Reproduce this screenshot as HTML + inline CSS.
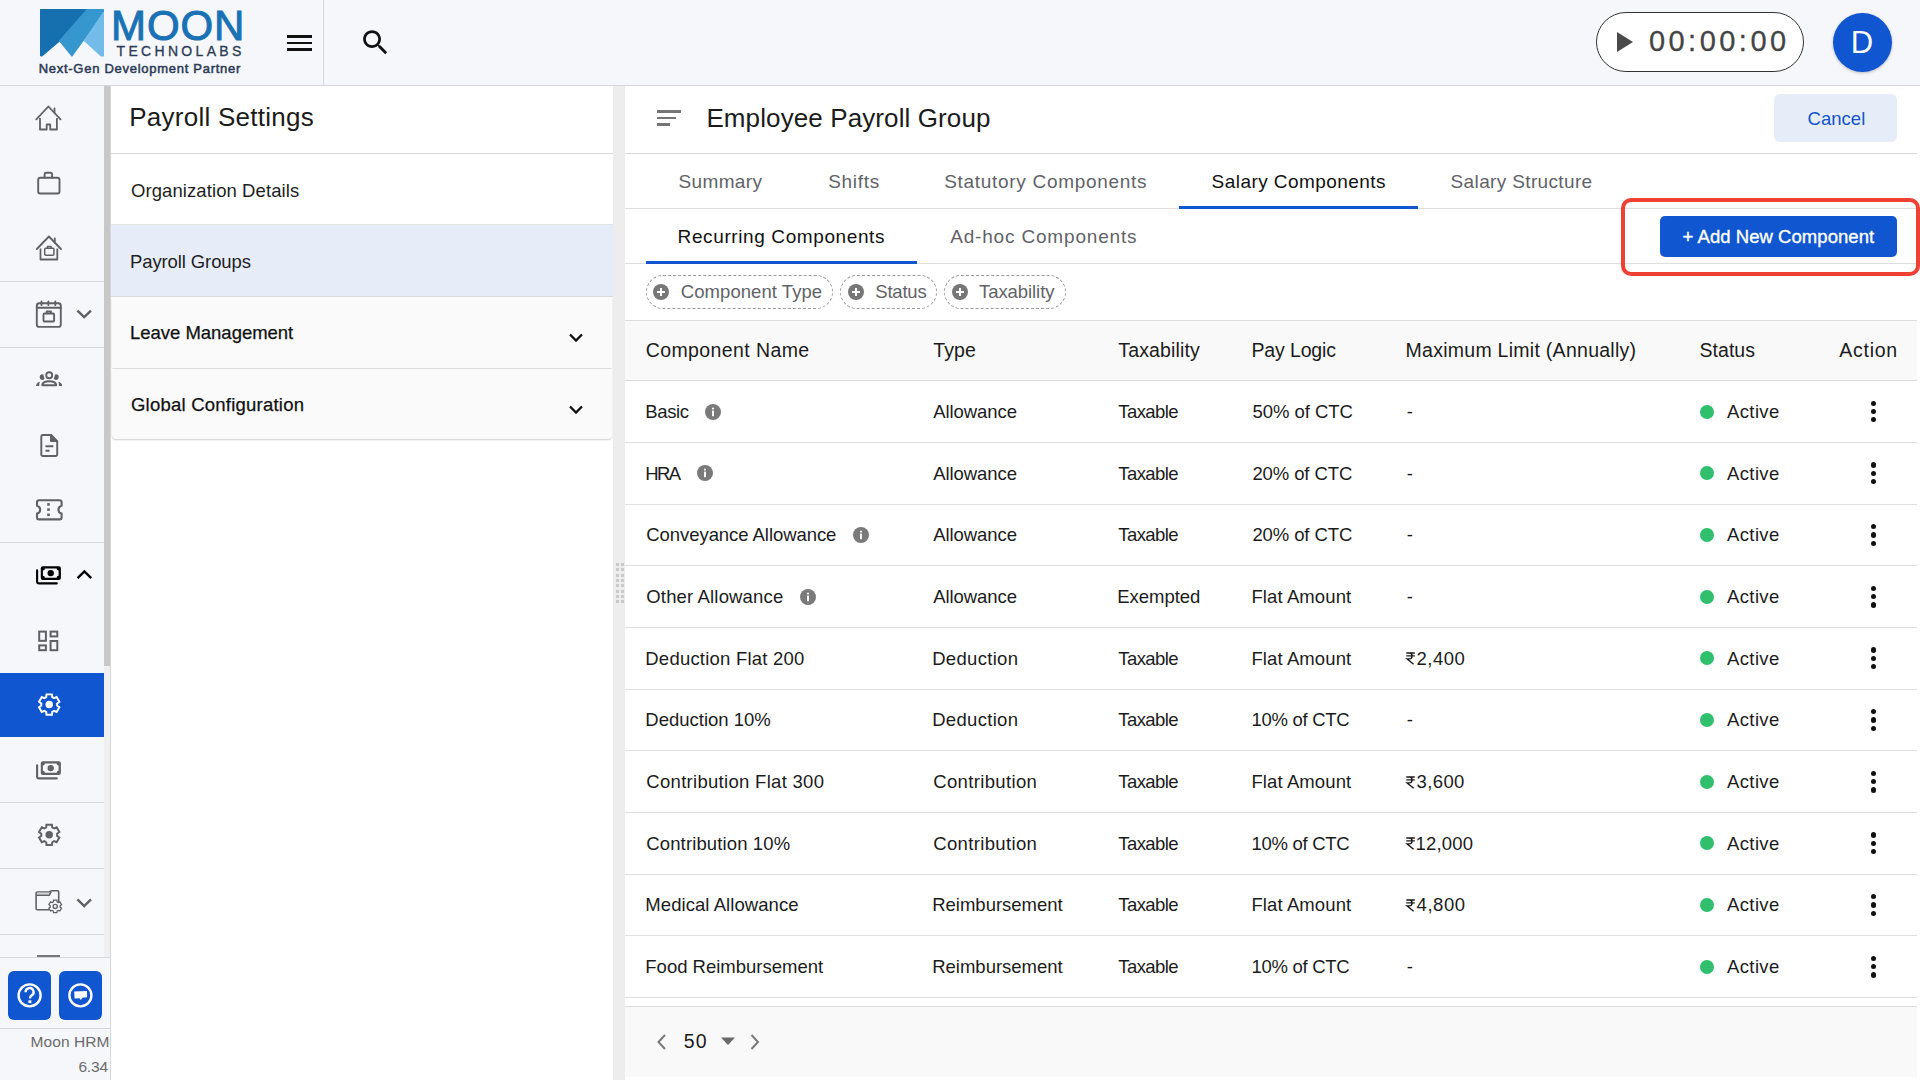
<!DOCTYPE html>
<html><head><meta charset="utf-8"><title>Payroll Settings</title>
<style>
html,body{margin:0;padding:0;width:1920px;height:1080px;overflow:hidden;background:#fff;position:relative;font-family:"Liberation Sans",sans-serif}
.t{position:absolute;line-height:1;white-space:nowrap;font-family:"Liberation Sans",sans-serif}
.r{position:absolute;box-sizing:content-box}
svg.r{overflow:visible}
</style></head><body>
<div class="r" style="left:0px;top:0px;width:1920px;height:85px;background:#f6f7fb;"></div>
<div class="r" style="left:0px;top:85px;width:1920px;height:1px;background:#d6d7dc;"></div>
<div class="r" style="left:323px;top:0px;width:1px;height:85px;background:#d6d7dc;"></div>
<svg class="r" style="left:36px;top:5px;" width="72" height="56" viewBox="0 0 72 56">
<g stroke-linejoin="round" stroke-width="1.2">
<path d="M4.6 4.6 L51 4.6 L23.6 35.8 L5.8 51 L4.6 50.6 Z" fill="#1670b0" stroke="#1670b0"/>
<path d="M51 4.6 L67.4 4.6 L67.4 7.6 L36 51 L23.6 35.8 Z" fill="#3696ce" stroke="#3696ce"/>
<path d="M67.4 7.6 L67.4 51 L65.3 51 L48.5 35.8 Z" fill="#73bce8" stroke="#73bce8"/>
</g></svg>
<div class="t" style="left:111.00px;top:4.5px;font-size:42px;color:#1a72b5;letter-spacing:0.892px;-webkit-text-stroke:1.0px #1a72b5;">MOON</div>
<div class="t" style="left:116.50px;top:43.6px;font-size:14px;color:#2b3a55;letter-spacing:3.325px;-webkit-text-stroke:0.3px #2b3a55;">TECHNOLABS</div>
<div class="t" style="left:38.70px;top:62px;font-size:13px;color:#2b3a55;letter-spacing:0.724px;-webkit-text-stroke:0.5px #2b3a55;">Next-Gen Development Partner</div>
<div class="r" style="left:287px;top:35px;width:25px;height:2.9px;background:#111;"></div>
<div class="r" style="left:287px;top:41.7px;width:25px;height:2.3px;background:#111;"></div>
<div class="r" style="left:287px;top:48.2px;width:25px;height:2.7px;background:#111;"></div>
<svg class="r" style="left:359px;top:26px;" width="33" height="33" viewBox="0 0 24 24"><path fill="#111" d="M15.5 14h-.79l-.28-.27C15.41 12.59 16 11.11 16 9.5 16 5.91 13.09 3 9.5 3S3 5.91 3 9.5 5.91 16 9.5 16c1.61 0 3.09-.59 4.23-1.57l.27.28v.79l5 4.99L20.49 19l-4.99-5zm-6 0C7.01 14 5 11.99 5 9.5S7.01 5 9.5 5 14 7.01 14 9.5 11.99 14 9.5 14z"/></svg>
<div class="r" style="left:1596.3px;top:12px;width:206.2px;height:58.4px;border:1.5px solid #333;border-radius:31px;background:#fff"></div>
<svg class="r" style="left:1617px;top:32px;" width="16" height="20" viewBox="0 0 16 20"><path d="M0 0 L16 10 L0 20 Z" fill="#4a4a4a"/></svg>
<div class="t" style="left:1648.90px;top:27.4px;font-size:29px;color:#444;letter-spacing:3.478px;-webkit-text-stroke:0.3px #444;">00:00:00</div>
<div class="r" style="left:1833px;top:13px;width:59px;height:59px;border-radius:50%;background:#0f56d0;box-shadow:0 1px 3px rgba(0,0,0,.25)"></div>
<div class="t" style="left:1850.70px;top:26.5px;font-size:31px;color:#fff;">D</div>
<div class="r" style="left:0px;top:86px;width:104px;height:871px;background:#f6f7fb;"></div>
<div class="r" style="left:104px;top:86px;width:6px;height:871px;background:#f0f0f0;"></div>
<div class="r" style="left:104px;top:86px;width:6px;height:580px;background:#c8c8c8;"></div>
<div class="r" style="left:110px;top:86px;width:1px;height:994px;background:#d6d7dc;"></div>
<div class="r" style="left:0px;top:281px;width:104px;height:1px;background:#d6d7dc;"></div>
<div class="r" style="left:0px;top:347px;width:104px;height:1px;background:#d6d7dc;"></div>
<div class="r" style="left:0px;top:542px;width:104px;height:1px;background:#d6d7dc;"></div>
<div class="r" style="left:0px;top:802px;width:104px;height:1px;background:#d6d7dc;"></div>
<div class="r" style="left:0px;top:868px;width:104px;height:1px;background:#d6d7dc;"></div>
<div class="r" style="left:0px;top:934px;width:104px;height:1px;background:#d6d7dc;"></div>
<div class="r" style="left:0px;top:673px;width:104px;height:64px;background:#0f56d0;"></div>
<svg class="r" style="left:28px;top:98px;" width="44" height="40" viewBox="0 0 44 40"><g fill="none" stroke="#5f6165" stroke-width="1.8" stroke-linecap="round" stroke-linejoin="round">
<path d="M8.3 21.3 L20.4 8.5 L32.6 21.3"/><path d="M26.5 10.4 L26.5 14.8"/>
<path d="M12 20 V31.5 H18.7 V26.5 H22.2 V31.5 H28.9 V20" stroke-linecap="butt"/></g></svg>
<svg class="r" style="left:28px;top:163px;" width="44" height="40" viewBox="0 0 44 40"><g fill="none" stroke="#5f6165" stroke-width="1.9" stroke-linecap="round" stroke-linejoin="round">
<rect x="10.2" y="14.7" width="21.3" height="15.8" rx="2"/><path d="M16.6 14.7 V11.3 a1.5 1.5 0 0 1 1.5 -1.5 H22.6 a1.5 1.5 0 0 1 1.5 1.5 V14.7"/></g></svg>
<svg class="r" style="left:28px;top:228px;" width="44" height="40" viewBox="0 0 44 40"><g fill="none" stroke="#5f6165" stroke-width="1.8" stroke-linecap="round" stroke-linejoin="round">
<path d="M8.8 21 L20.9 8.5 L33 21"/><path d="M26.8 10.4 L26.8 14.5"/>
<path d="M12.5 20.5 V31.5 H29.3 V20.5" stroke-linecap="butt"/></g>
<g fill="none" stroke="#5f6165" stroke-width="1.5" stroke-linecap="round" stroke-linejoin="round"><rect x="16.7" y="20.3" width="9.2" height="7" rx="1"/><path d="M19.5 20.3 V18.6 H23.1 V20.3"/></g></svg>
<svg class="r" style="left:28px;top:294px;" width="72" height="42" viewBox="0 0 72 42"><g fill="none" stroke="#5f6165" stroke-width="1.9" stroke-linecap="round" stroke-linejoin="round">
<rect x="8.8" y="9.2" width="24" height="23.7" rx="2.5"/><path d="M8.8 13.8 H32.8"/>
<path d="M13.5 7.5 V11 M20.4 7.5 V11 M27.3 7.5 V11"/>
<rect x="15.5" y="19.5" width="10.6" height="8" rx="1"/><path d="M18.7 19.2 V17.5 H23 V19.2"/>
</g><path d="M49.4 16.6 L56.2 23.2 L63 16.6" fill="none" stroke="#5f6165" stroke-width="2.4"/></svg>
<svg class="r" style="left:28px;top:360px;" width="44" height="40" viewBox="0 0 44 40"><g fill="#5f6165">
<ellipse cx="14.3" cy="17.1" rx="2.6" ry="2.8"/><ellipse cx="28.1" cy="17.1" rx="2.6" ry="2.8"/>
<circle cx="21.2" cy="15.2" r="5.6" fill="#f6f7fb"/>
<circle cx="21.2" cy="15.2" r="3.0" fill="none" stroke="#5f6165" stroke-width="1.9"/>
<path d="M14.3 25.2 Q14.6 21.2 21.2 21.2 Q27.9 21.2 28.2 25.2 Z" fill="none" stroke="#5f6165" stroke-width="2.1" stroke-linejoin="round"/>
<path d="M8 26 Q8.3 22.6 11.9 21.8 Q11 23.6 11.3 26 Z"/>
<path d="M34.2 26 Q33.9 22.6 30.3 21.8 Q31.2 23.6 30.9 26 Z"/>
</g></svg>
<svg class="r" style="left:28px;top:425px;" width="44" height="40" viewBox="0 0 44 40"><g fill="none" stroke="#5f6165" stroke-width="1.9" stroke-linecap="round" stroke-linejoin="round">
<path d="M15.3 10 H23.2 L29.2 16.2 V29.5 a1.5 1.5 0 0 1 -1.5 1.5 H14.8 a1.5 1.5 0 0 1 -1.5 -1.5 V11.5 a1.5 1.5 0 0 1 1.5 -1.5z"/>
<path d="M23 10.5 V16 H28.8" /><path d="M17.5 21.2 H25.4 M17.5 25.8 H21.5" stroke-linecap="butt"/></g>
<path d="M23 10 L29.2 16.2 H23 Z" fill="#5f6165"/></svg>
<svg class="r" style="left:28px;top:490px;" width="44" height="40" viewBox="0 0 44 40"><g fill="none" stroke="#5f6165" stroke-width="2.1" stroke-linecap="round" stroke-linejoin="round">
<path d="M9 12.2 a2 2 0 0 1 2 -2 H31.6 a2 2 0 0 1 2 2 V15.8 a4 4 0 0 0 0 7.8 V27.4 a2 2 0 0 1 -2 2 H11 a2 2 0 0 1 -2 -2 V23.6 a4 4 0 0 0 0 -7.8 Z"/></g>
<g fill="#5f6165"><rect x="19.2" y="13.1" width="2.6" height="2.6"/><rect x="19.2" y="18.3" width="2.6" height="2.6"/><rect x="19.2" y="23.5" width="2.6" height="2.6"/></g></svg>
<svg class="r" style="left:28px;top:555px;" width="72" height="42" viewBox="0 0 72 42"><rect x="12.8" y="11.3" width="20.1" height="13.6" rx="2" fill="#000"/>
<path d="M16.9 13.5 H28.6 A2.0 2.0 0 0 0 30.6 15.5 V20.7 A2.0 2.0 0 0 0 28.6 22.7 H16.9 A2.0 2.0 0 0 0 14.9 20.7 V15.5 A2.0 2.0 0 0 0 16.9 13.5 Z" fill="#f6f7fb"/>
<circle cx="22.7" cy="18.1" r="3.2" fill="#000"/>
<path d="M9.1 15.2 V26.4 a2 2 0 0 0 2 2 H28.8" fill="none" stroke="#000" stroke-width="2.1" stroke-linecap="round" stroke-linejoin="round"/><path d="M48.6 23.5 L63.2 16 " fill="none"/><path d="M49.6 23.2 L56.4 16.4 L63.2 23.2" fill="none" stroke="#000" stroke-width="2.4"/></svg>
<svg class="r" style="left:28px;top:620px;" width="44" height="40" viewBox="0 0 44 40"><g fill="none" stroke="#5f6165" stroke-width="2">
<rect x="11.2" y="11.6" width="6.7" height="9.2"/><rect x="22.6" y="11.6" width="6.7" height="4.8"/>
<rect x="11.2" y="25.4" width="6.7" height="4.8"/><rect x="22.6" y="21" width="6.7" height="9.2"/></g></svg>
<svg class="r" style="left:28px;top:685px;" width="44" height="40" viewBox="0 0 44 40"><path d="M23.92 9.35 L18.48 9.35 L18.20 12.08 L16.28 13.20 L13.77 12.07 L11.05 16.78 L13.28 18.39 L13.28 20.61 L11.05 22.22 L13.77 26.93 L16.28 25.80 L18.20 26.92 L18.48 29.65 L23.92 29.65 L24.20 26.92 L26.12 25.80 L28.63 26.93 L31.35 22.22 L29.12 20.61 L29.12 18.39 L31.35 16.78 L28.63 12.07 L26.12 13.20 L24.20 12.08Z" fill="none" stroke="#fff" stroke-width="1.95" stroke-linejoin="miter"/><circle cx="21.2" cy="19.5" r="3.72" fill="#fff"/></svg>
<svg class="r" style="left:28px;top:750px;" width="44" height="40" viewBox="0 0 44 40"><rect x="12.8" y="11.3" width="20.1" height="13.6" rx="2" fill="#5f6165"/>
<path d="M16.9 13.5 H28.6 A2.0 2.0 0 0 0 30.6 15.5 V20.7 A2.0 2.0 0 0 0 28.6 22.7 H16.9 A2.0 2.0 0 0 0 14.9 20.7 V15.5 A2.0 2.0 0 0 0 16.9 13.5 Z" fill="#f6f7fb"/>
<circle cx="22.7" cy="18.1" r="3.2" fill="#5f6165"/>
<path d="M9.1 15.2 V26.4 a2 2 0 0 0 2 2 H28.8" fill="none" stroke="#5f6165" stroke-width="2.1" stroke-linecap="round" stroke-linejoin="round"/></svg>
<svg class="r" style="left:28px;top:815px;" width="44" height="40" viewBox="0 0 44 40"><path d="M23.92 9.65 L18.48 9.65 L18.20 12.38 L16.28 13.50 L13.77 12.37 L11.05 17.08 L13.28 18.69 L13.28 20.91 L11.05 22.52 L13.77 27.23 L16.28 26.10 L18.20 27.22 L18.48 29.95 L23.92 29.95 L24.20 27.22 L26.12 26.10 L28.63 27.23 L31.35 22.52 L29.12 20.91 L29.12 18.69 L31.35 17.08 L28.63 12.37 L26.12 13.50 L24.20 12.38Z" fill="none" stroke="#5f6165" stroke-width="1.95" stroke-linejoin="miter"/><circle cx="21.2" cy="19.8" r="3.72" fill="#5f6165"/></svg>
<svg class="r" style="left:28px;top:880px;" width="72" height="42" viewBox="0 0 72 42"><g fill="none" stroke="#5f6165" stroke-width="1.6" stroke-linejoin="round">
<path d="M21.8 29.7 H9.3 a1.2 1.2 0 0 1 -1.2 -1.2 V13.3 a1.2 1.2 0 0 1 1.2 -1.2 H21.3 L23.5 10.7 H29.5 a1.2 1.2 0 0 1 1.2 1.2 V22"/>
<path d="M8.1 15.3 H21.2 L23.2 11.3"/></g>
<path d="M8.8 13.5 H21 L22.2 11.9 H9.3 Z" fill="#aaa"/>
<path d="M28.90 20.07 L25.50 20.07 L25.33 21.78 L24.13 22.47 L22.57 21.77 L20.87 24.70 L22.26 25.71 L22.26 27.09 L20.87 28.10 L22.57 31.03 L24.13 30.33 L25.33 31.02 L25.50 32.73 L28.90 32.73 L29.07 31.02 L30.27 30.33 L31.83 31.03 L33.53 28.10 L32.14 27.09 L32.14 25.71 L33.53 24.70 L31.83 21.77 L30.27 22.47 L29.07 21.78Z" fill="#f6f7fb" stroke="#5f6165" stroke-width="1.22" stroke-linejoin="miter"/><circle cx="27.2" cy="26.4" r="2.09" fill="none" stroke="#5f6165" stroke-width="1.33"/>
<path d="M49.4 19.4 L56.2 26 L63 19.4" fill="none" stroke="#5f6165" stroke-width="2.4"/></svg>
<div class="r" style="left:37px;top:955px;width:23px;height:2px;background:#777;"></div>
<div class="r" style="left:0px;top:957px;width:110px;height:123px;background:#f6f7fb;"></div>
<div class="r" style="left:0px;top:957px;width:110px;height:1px;background:#d6d7dc;"></div>
<div class="r" style="left:0px;top:1028px;width:110px;height:1px;background:#d6d7dc;"></div>
<div class="r" style="left:8px;top:971px;width:43px;height:49px;border-radius:6px;background:#0f56d0"></div>
<div class="r" style="left:59px;top:971px;width:43px;height:49px;border-radius:6px;background:#0f56d0"></div>
<svg class="r" style="left:8px;top:971px;" width="43" height="49" viewBox="0 0 43 49"><circle cx="21.6" cy="24.4" r="11" fill="none" stroke="#fff" stroke-width="2.4"/><path d="M17.6 21.2 a4 4 0 1 1 5.8 3.4 c-1.3 .8 -1.4 1.6 -1.4 3" fill="none" stroke="#fff" stroke-width="2.3"/><rect x="20.4" y="29.3" width="3" height="2.8" fill="#fff"/></svg>
<svg class="r" style="left:59px;top:971px;" width="43" height="49" viewBox="0 0 43 49"><circle cx="21.4" cy="24.4" r="11" fill="none" stroke="#fff" stroke-width="2.4"/><path d="M15.2 20.6 L28 19.9 L28.1 26.2 L23.2 26.8 L21.9 28.9 L20.4 27.2 L15.6 27.6 Z" fill="#fff"/></svg>
<div class="t" style="left:30.60px;top:1033.5px;font-size:15.5px;color:#6b6b6b;letter-spacing:0.048px;">Moon HRM</div>
<div class="t" style="left:78.40px;top:1059px;font-size:15.5px;color:#6b6b6b;letter-spacing:-0.182px;">6.34</div>
<div class="r" style="left:111px;top:86px;width:502px;height:994px;background:#fff;"></div>
<div class="t" style="left:129.25px;top:104px;font-size:26px;color:#1b1b1b;letter-spacing:0.257px;">Payroll Settings</div>
<div class="r" style="left:111px;top:153px;width:502px;height:1px;background:#d6d7dc;"></div>
<div class="t" style="left:131.00px;top:181.8px;font-size:18.5px;color:#1e1e1e;letter-spacing:0.083px;">Organization Details</div>
<div class="r" style="left:111px;top:224px;width:502px;height:1px;background:#e2e2e2;"></div>
<div class="r" style="left:111px;top:225px;width:502px;height:71px;background:#e6edf8;"></div>
<div class="t" style="left:130.00px;top:253.3px;font-size:18.5px;color:#1e1e1e;letter-spacing:-0.108px;">Payroll Groups</div>
<div class="r" style="left:111px;top:296px;width:502px;height:1px;background:#dcdcdc;"></div>
<div class="r" style="left:112px;top:297px;width:500px;height:71px;background:#fafafa;box-shadow:0 1px 2px rgba(0,0,0,.18)"></div>
<div class="r" style="left:112px;top:369px;width:500px;height:70px;background:#fafafa;border-radius:0 0 4px 4px;box-shadow:0 1px 2px rgba(0,0,0,.2)"></div>
<div class="t" style="left:130.00px;top:323.9px;font-size:18.5px;color:#111;letter-spacing:-0.019px;-webkit-text-stroke:0.25px #111;">Leave Management</div>
<div class="t" style="left:131.00px;top:395.7px;font-size:18.5px;color:#111;letter-spacing:0.228px;-webkit-text-stroke:0.25px #111;">Global Configuration</div>
<svg class="r" style="left:566px;top:332px;" width="20" height="12" viewBox="0 0 20 12"><path d="M4 2.5 L10 8.5 L16 2.5" fill="none" stroke="#111" stroke-width="2.3"/></svg>
<svg class="r" style="left:566px;top:403.5px;" width="20" height="12" viewBox="0 0 20 12"><path d="M4 2.5 L10 8.5 L16 2.5" fill="none" stroke="#111" stroke-width="2.3"/></svg>
<div class="r" style="left:613px;top:86px;width:12px;height:994px;background:#ededed;"></div>
<div class="r" style="left:616px;top:563.0px;width:3px;height:3px;background:#c9c9c9;"></div>
<div class="r" style="left:620.5px;top:563.0px;width:3px;height:3px;background:#c9c9c9;"></div>
<div class="r" style="left:616px;top:568.3px;width:3px;height:3px;background:#c9c9c9;"></div>
<div class="r" style="left:620.5px;top:568.3px;width:3px;height:3px;background:#c9c9c9;"></div>
<div class="r" style="left:616px;top:573.6px;width:3px;height:3px;background:#c9c9c9;"></div>
<div class="r" style="left:620.5px;top:573.6px;width:3px;height:3px;background:#c9c9c9;"></div>
<div class="r" style="left:616px;top:578.9px;width:3px;height:3px;background:#c9c9c9;"></div>
<div class="r" style="left:620.5px;top:578.9px;width:3px;height:3px;background:#c9c9c9;"></div>
<div class="r" style="left:616px;top:584.2px;width:3px;height:3px;background:#c9c9c9;"></div>
<div class="r" style="left:620.5px;top:584.2px;width:3px;height:3px;background:#c9c9c9;"></div>
<div class="r" style="left:616px;top:589.5px;width:3px;height:3px;background:#c9c9c9;"></div>
<div class="r" style="left:620.5px;top:589.5px;width:3px;height:3px;background:#c9c9c9;"></div>
<div class="r" style="left:616px;top:594.8px;width:3px;height:3px;background:#c9c9c9;"></div>
<div class="r" style="left:620.5px;top:594.8px;width:3px;height:3px;background:#c9c9c9;"></div>
<div class="r" style="left:616px;top:600.1px;width:3px;height:3px;background:#c9c9c9;"></div>
<div class="r" style="left:620.5px;top:600.1px;width:3px;height:3px;background:#c9c9c9;"></div>
<div class="r" style="left:625px;top:86px;width:1295px;height:994px;background:#fff;"></div>
<div class="r" style="left:657px;top:110px;width:24px;height:2.6px;background:#757575;"></div>
<div class="r" style="left:657px;top:116.7px;width:19px;height:2.6px;background:#757575;"></div>
<div class="r" style="left:657px;top:123.2px;width:13px;height:2.6px;background:#757575;"></div>
<div class="t" style="left:706.40px;top:104.7px;font-size:26px;color:#1b1b1b;letter-spacing:0.108px;">Employee Payroll Group</div>
<div class="r" style="left:1774px;top:94px;width:123px;height:48px;border-radius:6px;background:#e7edf8"></div>
<div class="t" style="left:1807.50px;top:110px;font-size:18.5px;color:#1155cc;letter-spacing:0.045px;">Cancel</div>
<div class="r" style="left:625px;top:153px;width:1292px;height:1px;background:#d6d7dc;"></div>
<div class="t" style="left:678.60px;top:171.5px;font-size:19px;color:#5f6368;letter-spacing:0.335px;">Summary</div>
<div class="t" style="left:828.20px;top:171.5px;font-size:19px;color:#5f6368;letter-spacing:0.696px;">Shifts</div>
<div class="t" style="left:944.20px;top:171.5px;font-size:19px;color:#5f6368;letter-spacing:0.698px;">Statutory Components</div>
<div class="t" style="left:1211.60px;top:171.5px;font-size:19px;color:#111;letter-spacing:0.446px;">Salary Components</div>
<div class="t" style="left:1450.60px;top:171.5px;font-size:19px;color:#5f6368;letter-spacing:0.357px;">Salary Structure</div>
<div class="r" style="left:625px;top:208px;width:1292px;height:1px;background:#dedede;"></div>
<div class="r" style="left:1179px;top:205.5px;width:239px;height:3px;background:#0f56d0;"></div>
<div class="t" style="left:677.60px;top:227px;font-size:19px;color:#111;letter-spacing:0.607px;">Recurring Components</div>
<div class="t" style="left:950.20px;top:227px;font-size:19px;color:#5f6368;letter-spacing:0.824px;">Ad-hoc Components</div>
<div class="r" style="left:625px;top:263px;width:1292px;height:1px;background:#dedede;"></div>
<div class="r" style="left:646px;top:260.5px;width:271px;height:3px;background:#0f56d0;"></div>
<div class="r" style="left:1660px;top:216px;width:237px;height:41px;border-radius:5px;background:#0f56d0"></div>
<div class="t" style="left:1682.50px;top:228px;font-size:18.5px;color:#fff;letter-spacing:0.047px;-webkit-text-stroke:0.35px #fff;">+ Add New Component</div>
<div class="r" style="left:1621px;top:198px;width:291px;height:70px;border:4.3px solid #ef4133;border-radius:10px"></div>
<div class="r" style="left:646px;top:275px;width:185px;height:32px;border:1px dashed #9a9a9a;border-radius:17px"></div>
<svg class="r" style="left:653.3px;top:283.6px;" width="16" height="16" viewBox="0 0 16 16"><circle cx="8" cy="8" r="8" fill="#777"/><path d="M8 4 V12 M4 8 H12" stroke="#fff" stroke-width="2"/></svg>
<div class="t" style="left:680.80px;top:283.2px;font-size:18.5px;color:#5f6368;letter-spacing:0.061px;">Component Type</div>
<div class="r" style="left:840px;top:275px;width:95px;height:32px;border:1px dashed #9a9a9a;border-radius:17px"></div>
<svg class="r" style="left:848.3px;top:283.6px;" width="16" height="16" viewBox="0 0 16 16"><circle cx="8" cy="8" r="8" fill="#777"/><path d="M8 4 V12 M4 8 H12" stroke="#fff" stroke-width="2"/></svg>
<div class="t" style="left:875.30px;top:283.2px;font-size:18.5px;color:#5f6368;letter-spacing:-0.219px;">Status</div>
<div class="r" style="left:944px;top:275px;width:120px;height:32px;border:1px dashed #9a9a9a;border-radius:17px"></div>
<svg class="r" style="left:952.1px;top:283.6px;" width="16" height="16" viewBox="0 0 16 16"><circle cx="8" cy="8" r="8" fill="#777"/><path d="M8 4 V12 M4 8 H12" stroke="#fff" stroke-width="2"/></svg>
<div class="t" style="left:979.00px;top:283.2px;font-size:18.5px;color:#5f6368;letter-spacing:-0.071px;">Taxability</div>
<div class="r" style="left:625px;top:320px;width:1292px;height:1px;background:#dcdcdc;"></div>
<div class="r" style="left:625px;top:321px;width:1292px;height:59.5px;background:#f9f9f9;"></div>
<div class="r" style="left:625px;top:380px;width:1292px;height:1px;background:#dcdcdc;"></div>
<div class="t" style="left:645.70px;top:341.3px;font-size:19.5px;color:#1b1b1b;letter-spacing:0.400px;">Component Name</div>
<div class="t" style="left:933.30px;top:341.3px;font-size:19.5px;color:#1b1b1b;letter-spacing:0.090px;">Type</div>
<div class="t" style="left:1118.30px;top:341.3px;font-size:19.5px;color:#1b1b1b;letter-spacing:0.139px;">Taxability</div>
<div class="t" style="left:1251.40px;top:341.3px;font-size:19.5px;color:#1b1b1b;letter-spacing:-0.123px;">Pay Logic</div>
<div class="t" style="left:1405.50px;top:341.3px;font-size:19.5px;color:#1b1b1b;letter-spacing:0.274px;">Maximum Limit (Annually)</div>
<div class="t" style="left:1699.40px;top:341.3px;font-size:19.5px;color:#1b1b1b;letter-spacing:0.074px;">Status</div>
<div class="t" style="left:1839.30px;top:341.3px;font-size:19.5px;color:#1b1b1b;letter-spacing:0.730px;">Action</div>
<div class="t" style="left:645.30px;top:403.0px;font-size:18.5px;color:#1b1b1b;letter-spacing:-0.372px;">Basic</div>
<svg class="r" style="left:704.5px;top:403.5px;" width="16" height="16" viewBox="0 0 16 16"><circle cx="8" cy="8" r="8" fill="#7a7a7a"/><circle cx="8" cy="4.6" r="1.1" fill="#fff"/><rect x="7.05" y="6.6" width="1.9" height="5.6" fill="#fff"/></svg>
<div class="t" style="left:933.20px;top:403.0px;font-size:18.5px;color:#1b1b1b;letter-spacing:-0.067px;">Allowance</div>
<div class="t" style="left:1118.30px;top:403.0px;font-size:18.5px;color:#1b1b1b;letter-spacing:-0.579px;">Taxable</div>
<div class="t" style="left:1252.40px;top:403.0px;font-size:18.5px;color:#1b1b1b;letter-spacing:-0.022px;">50% of CTC</div>
<div class="t" style="left:1406.80px;top:403.0px;font-size:18.5px;color:#1b1b1b;">-</div>
<div class="r" style="left:1700px;top:404.5px;width:14px;height:14px;border-radius:50%;background:#2fbf6d"></div>
<div class="t" style="left:1727.00px;top:403.0px;font-size:18.5px;color:#1b1b1b;letter-spacing:0.382px;">Active</div>
<div class="r" style="left:1870.6px;top:400.59999999999997px;width:5.3px;height:5.3px;border-radius:50%;background:#111"></div>
<div class="r" style="left:1870.6px;top:408.9px;width:5.3px;height:5.3px;border-radius:50%;background:#111"></div>
<div class="r" style="left:1870.6px;top:417.2px;width:5.3px;height:5.3px;border-radius:50%;background:#111"></div>
<div class="r" style="left:625px;top:442.0px;width:1292px;height:1px;background:#e0e0e0;"></div>
<div class="t" style="left:645.30px;top:464.67px;font-size:18.5px;color:#1b1b1b;letter-spacing:-1.660px;">HRA</div>
<svg class="r" style="left:697.3px;top:465.17px;" width="16" height="16" viewBox="0 0 16 16"><circle cx="8" cy="8" r="8" fill="#7a7a7a"/><circle cx="8" cy="4.6" r="1.1" fill="#fff"/><rect x="7.05" y="6.6" width="1.9" height="5.6" fill="#fff"/></svg>
<div class="t" style="left:933.20px;top:464.67px;font-size:18.5px;color:#1b1b1b;letter-spacing:-0.067px;">Allowance</div>
<div class="t" style="left:1118.30px;top:464.67px;font-size:18.5px;color:#1b1b1b;letter-spacing:-0.579px;">Taxable</div>
<div class="t" style="left:1252.40px;top:464.67px;font-size:18.5px;color:#1b1b1b;letter-spacing:-0.100px;">20% of CTC</div>
<div class="t" style="left:1406.80px;top:464.67px;font-size:18.5px;color:#1b1b1b;">-</div>
<div class="r" style="left:1700px;top:466.17px;width:14px;height:14px;border-radius:50%;background:#2fbf6d"></div>
<div class="t" style="left:1727.00px;top:464.67px;font-size:18.5px;color:#1b1b1b;letter-spacing:0.382px;">Active</div>
<div class="r" style="left:1870.6px;top:462.27px;width:5.3px;height:5.3px;border-radius:50%;background:#111"></div>
<div class="r" style="left:1870.6px;top:470.57px;width:5.3px;height:5.3px;border-radius:50%;background:#111"></div>
<div class="r" style="left:1870.6px;top:478.87px;width:5.3px;height:5.3px;border-radius:50%;background:#111"></div>
<div class="r" style="left:625px;top:503.67px;width:1292px;height:1px;background:#e0e0e0;"></div>
<div class="t" style="left:646.30px;top:526.34px;font-size:18.5px;color:#1b1b1b;letter-spacing:-0.064px;">Conveyance Allowance</div>
<svg class="r" style="left:852.6px;top:526.84px;" width="16" height="16" viewBox="0 0 16 16"><circle cx="8" cy="8" r="8" fill="#7a7a7a"/><circle cx="8" cy="4.6" r="1.1" fill="#fff"/><rect x="7.05" y="6.6" width="1.9" height="5.6" fill="#fff"/></svg>
<div class="t" style="left:933.20px;top:526.34px;font-size:18.5px;color:#1b1b1b;letter-spacing:-0.067px;">Allowance</div>
<div class="t" style="left:1118.30px;top:526.34px;font-size:18.5px;color:#1b1b1b;letter-spacing:-0.579px;">Taxable</div>
<div class="t" style="left:1252.40px;top:526.34px;font-size:18.5px;color:#1b1b1b;letter-spacing:-0.100px;">20% of CTC</div>
<div class="t" style="left:1406.80px;top:526.34px;font-size:18.5px;color:#1b1b1b;">-</div>
<div class="r" style="left:1700px;top:527.84px;width:14px;height:14px;border-radius:50%;background:#2fbf6d"></div>
<div class="t" style="left:1727.00px;top:526.34px;font-size:18.5px;color:#1b1b1b;letter-spacing:0.382px;">Active</div>
<div class="r" style="left:1870.6px;top:523.94px;width:5.3px;height:5.3px;border-radius:50%;background:#111"></div>
<div class="r" style="left:1870.6px;top:532.24px;width:5.3px;height:5.3px;border-radius:50%;background:#111"></div>
<div class="r" style="left:1870.6px;top:540.54px;width:5.3px;height:5.3px;border-radius:50%;background:#111"></div>
<div class="r" style="left:625px;top:565.34px;width:1292px;height:1px;background:#e0e0e0;"></div>
<div class="t" style="left:646.30px;top:588.01px;font-size:18.5px;color:#1b1b1b;letter-spacing:0.154px;">Other Allowance</div>
<svg class="r" style="left:799.7px;top:588.51px;" width="16" height="16" viewBox="0 0 16 16"><circle cx="8" cy="8" r="8" fill="#7a7a7a"/><circle cx="8" cy="4.6" r="1.1" fill="#fff"/><rect x="7.05" y="6.6" width="1.9" height="5.6" fill="#fff"/></svg>
<div class="t" style="left:933.20px;top:588.01px;font-size:18.5px;color:#1b1b1b;letter-spacing:-0.067px;">Allowance</div>
<div class="t" style="left:1117.30px;top:588.01px;font-size:18.5px;color:#1b1b1b;letter-spacing:-0.044px;">Exempted</div>
<div class="t" style="left:1251.40px;top:588.01px;font-size:18.5px;color:#1b1b1b;letter-spacing:0.110px;">Flat Amount</div>
<div class="t" style="left:1406.80px;top:588.01px;font-size:18.5px;color:#1b1b1b;">-</div>
<div class="r" style="left:1700px;top:589.51px;width:14px;height:14px;border-radius:50%;background:#2fbf6d"></div>
<div class="t" style="left:1727.00px;top:588.01px;font-size:18.5px;color:#1b1b1b;letter-spacing:0.382px;">Active</div>
<div class="r" style="left:1870.6px;top:585.61px;width:5.3px;height:5.3px;border-radius:50%;background:#111"></div>
<div class="r" style="left:1870.6px;top:593.91px;width:5.3px;height:5.3px;border-radius:50%;background:#111"></div>
<div class="r" style="left:1870.6px;top:602.2099999999999px;width:5.3px;height:5.3px;border-radius:50%;background:#111"></div>
<div class="r" style="left:625px;top:627.01px;width:1292px;height:1px;background:#e0e0e0;"></div>
<div class="t" style="left:645.30px;top:649.6800000000001px;font-size:18.5px;color:#1b1b1b;letter-spacing:0.218px;">Deduction Flat 200</div>
<div class="t" style="left:932.20px;top:649.6800000000001px;font-size:18.5px;color:#1b1b1b;letter-spacing:0.311px;">Deduction</div>
<div class="t" style="left:1118.30px;top:649.6800000000001px;font-size:18.5px;color:#1b1b1b;letter-spacing:-0.579px;">Taxable</div>
<div class="t" style="left:1251.40px;top:649.6800000000001px;font-size:18.5px;color:#1b1b1b;letter-spacing:0.110px;">Flat Amount</div>
<svg class="r" style="left:1406.3px;top:652.3800000000001px;" width="9" height="12.5" viewBox="0 0 9 12.5"><path d="M0.3 1 H8.8 M0.3 3.9 H8.8 M0.6 1 H3.2 a2.9 2.9 0 0 1 0 5.8 H1 L7.6 12.3" fill="none" stroke="#1b1b1b" stroke-width="1.35"/></svg>
<div class="t" style="left:1416.60px;top:649.6800000000001px;font-size:18.5px;color:#1b1b1b;letter-spacing:0.448px;">2,400</div>
<div class="r" style="left:1700px;top:651.1800000000001px;width:14px;height:14px;border-radius:50%;background:#2fbf6d"></div>
<div class="t" style="left:1727.00px;top:649.6800000000001px;font-size:18.5px;color:#1b1b1b;letter-spacing:0.382px;">Active</div>
<div class="r" style="left:1870.6px;top:647.2800000000001px;width:5.3px;height:5.3px;border-radius:50%;background:#111"></div>
<div class="r" style="left:1870.6px;top:655.58px;width:5.3px;height:5.3px;border-radius:50%;background:#111"></div>
<div class="r" style="left:1870.6px;top:663.88px;width:5.3px;height:5.3px;border-radius:50%;background:#111"></div>
<div class="r" style="left:625px;top:688.6800000000001px;width:1292px;height:1px;background:#e0e0e0;"></div>
<div class="t" style="left:645.30px;top:711.35px;font-size:18.5px;color:#1b1b1b;letter-spacing:-0.002px;">Deduction 10%</div>
<div class="t" style="left:932.20px;top:711.35px;font-size:18.5px;color:#1b1b1b;letter-spacing:0.311px;">Deduction</div>
<div class="t" style="left:1118.30px;top:711.35px;font-size:18.5px;color:#1b1b1b;letter-spacing:-0.579px;">Taxable</div>
<div class="t" style="left:1251.40px;top:711.35px;font-size:18.5px;color:#1b1b1b;letter-spacing:-0.277px;">10% of CTC</div>
<div class="t" style="left:1406.80px;top:711.35px;font-size:18.5px;color:#1b1b1b;">-</div>
<div class="r" style="left:1700px;top:712.85px;width:14px;height:14px;border-radius:50%;background:#2fbf6d"></div>
<div class="t" style="left:1727.00px;top:711.35px;font-size:18.5px;color:#1b1b1b;letter-spacing:0.382px;">Active</div>
<div class="r" style="left:1870.6px;top:708.95px;width:5.3px;height:5.3px;border-radius:50%;background:#111"></div>
<div class="r" style="left:1870.6px;top:717.25px;width:5.3px;height:5.3px;border-radius:50%;background:#111"></div>
<div class="r" style="left:1870.6px;top:725.55px;width:5.3px;height:5.3px;border-radius:50%;background:#111"></div>
<div class="r" style="left:625px;top:750.35px;width:1292px;height:1px;background:#e0e0e0;"></div>
<div class="t" style="left:646.30px;top:773.02px;font-size:18.5px;color:#1b1b1b;letter-spacing:0.297px;">Contribution Flat 300</div>
<div class="t" style="left:933.20px;top:773.02px;font-size:18.5px;color:#1b1b1b;letter-spacing:0.358px;">Contribution</div>
<div class="t" style="left:1118.30px;top:773.02px;font-size:18.5px;color:#1b1b1b;letter-spacing:-0.579px;">Taxable</div>
<div class="t" style="left:1251.40px;top:773.02px;font-size:18.5px;color:#1b1b1b;letter-spacing:0.110px;">Flat Amount</div>
<svg class="r" style="left:1406.3px;top:775.72px;" width="9" height="12.5" viewBox="0 0 9 12.5"><path d="M0.3 1 H8.8 M0.3 3.9 H8.8 M0.6 1 H3.2 a2.9 2.9 0 0 1 0 5.8 H1 L7.6 12.3" fill="none" stroke="#1b1b1b" stroke-width="1.35"/></svg>
<div class="t" style="left:1416.60px;top:773.02px;font-size:18.5px;color:#1b1b1b;letter-spacing:0.373px;">3,600</div>
<div class="r" style="left:1700px;top:774.52px;width:14px;height:14px;border-radius:50%;background:#2fbf6d"></div>
<div class="t" style="left:1727.00px;top:773.02px;font-size:18.5px;color:#1b1b1b;letter-spacing:0.382px;">Active</div>
<div class="r" style="left:1870.6px;top:770.62px;width:5.3px;height:5.3px;border-radius:50%;background:#111"></div>
<div class="r" style="left:1870.6px;top:778.92px;width:5.3px;height:5.3px;border-radius:50%;background:#111"></div>
<div class="r" style="left:1870.6px;top:787.2199999999999px;width:5.3px;height:5.3px;border-radius:50%;background:#111"></div>
<div class="r" style="left:625px;top:812.02px;width:1292px;height:1px;background:#e0e0e0;"></div>
<div class="t" style="left:646.30px;top:834.69px;font-size:18.5px;color:#1b1b1b;letter-spacing:0.129px;">Contribution 10%</div>
<div class="t" style="left:933.20px;top:834.69px;font-size:18.5px;color:#1b1b1b;letter-spacing:0.358px;">Contribution</div>
<div class="t" style="left:1118.30px;top:834.69px;font-size:18.5px;color:#1b1b1b;letter-spacing:-0.579px;">Taxable</div>
<div class="t" style="left:1251.40px;top:834.69px;font-size:18.5px;color:#1b1b1b;letter-spacing:-0.277px;">10% of CTC</div>
<svg class="r" style="left:1406.3px;top:837.3900000000001px;" width="9" height="12.5" viewBox="0 0 9 12.5"><path d="M0.3 1 H8.8 M0.3 3.9 H8.8 M0.6 1 H3.2 a2.9 2.9 0 0 1 0 5.8 H1 L7.6 12.3" fill="none" stroke="#1b1b1b" stroke-width="1.35"/></svg>
<div class="t" style="left:1415.60px;top:834.69px;font-size:18.5px;color:#1b1b1b;letter-spacing:0.161px;">12,000</div>
<div class="r" style="left:1700px;top:836.19px;width:14px;height:14px;border-radius:50%;background:#2fbf6d"></div>
<div class="t" style="left:1727.00px;top:834.69px;font-size:18.5px;color:#1b1b1b;letter-spacing:0.382px;">Active</div>
<div class="r" style="left:1870.6px;top:832.2900000000001px;width:5.3px;height:5.3px;border-radius:50%;background:#111"></div>
<div class="r" style="left:1870.6px;top:840.59px;width:5.3px;height:5.3px;border-radius:50%;background:#111"></div>
<div class="r" style="left:1870.6px;top:848.89px;width:5.3px;height:5.3px;border-radius:50%;background:#111"></div>
<div class="r" style="left:625px;top:873.69px;width:1292px;height:1px;background:#e0e0e0;"></div>
<div class="t" style="left:645.30px;top:896.36px;font-size:18.5px;color:#1b1b1b;letter-spacing:0.067px;">Medical Allowance</div>
<div class="t" style="left:932.20px;top:896.36px;font-size:18.5px;color:#1b1b1b;letter-spacing:-0.003px;">Reimbursement</div>
<div class="t" style="left:1118.30px;top:896.36px;font-size:18.5px;color:#1b1b1b;letter-spacing:-0.579px;">Taxable</div>
<div class="t" style="left:1251.40px;top:896.36px;font-size:18.5px;color:#1b1b1b;letter-spacing:0.110px;">Flat Amount</div>
<svg class="r" style="left:1406.3px;top:899.0600000000001px;" width="9" height="12.5" viewBox="0 0 9 12.5"><path d="M0.3 1 H8.8 M0.3 3.9 H8.8 M0.6 1 H3.2 a2.9 2.9 0 0 1 0 5.8 H1 L7.6 12.3" fill="none" stroke="#1b1b1b" stroke-width="1.35"/></svg>
<div class="t" style="left:1416.60px;top:896.36px;font-size:18.5px;color:#1b1b1b;letter-spacing:0.548px;">4,800</div>
<div class="r" style="left:1700px;top:897.86px;width:14px;height:14px;border-radius:50%;background:#2fbf6d"></div>
<div class="t" style="left:1727.00px;top:896.36px;font-size:18.5px;color:#1b1b1b;letter-spacing:0.382px;">Active</div>
<div class="r" style="left:1870.6px;top:893.96px;width:5.3px;height:5.3px;border-radius:50%;background:#111"></div>
<div class="r" style="left:1870.6px;top:902.26px;width:5.3px;height:5.3px;border-radius:50%;background:#111"></div>
<div class="r" style="left:1870.6px;top:910.56px;width:5.3px;height:5.3px;border-radius:50%;background:#111"></div>
<div class="r" style="left:625px;top:935.36px;width:1292px;height:1px;background:#e0e0e0;"></div>
<div class="t" style="left:645.30px;top:958.03px;font-size:18.5px;color:#1b1b1b;letter-spacing:-0.002px;">Food Reimbursement</div>
<div class="t" style="left:932.20px;top:958.03px;font-size:18.5px;color:#1b1b1b;letter-spacing:-0.003px;">Reimbursement</div>
<div class="t" style="left:1118.30px;top:958.03px;font-size:18.5px;color:#1b1b1b;letter-spacing:-0.579px;">Taxable</div>
<div class="t" style="left:1251.40px;top:958.03px;font-size:18.5px;color:#1b1b1b;letter-spacing:-0.277px;">10% of CTC</div>
<div class="t" style="left:1406.80px;top:958.03px;font-size:18.5px;color:#1b1b1b;">-</div>
<div class="r" style="left:1700px;top:959.53px;width:14px;height:14px;border-radius:50%;background:#2fbf6d"></div>
<div class="t" style="left:1727.00px;top:958.03px;font-size:18.5px;color:#1b1b1b;letter-spacing:0.382px;">Active</div>
<div class="r" style="left:1870.6px;top:955.63px;width:5.3px;height:5.3px;border-radius:50%;background:#111"></div>
<div class="r" style="left:1870.6px;top:963.93px;width:5.3px;height:5.3px;border-radius:50%;background:#111"></div>
<div class="r" style="left:1870.6px;top:972.2299999999999px;width:5.3px;height:5.3px;border-radius:50%;background:#111"></div>
<div class="r" style="left:625px;top:997.03px;width:1292px;height:1px;background:#e0e0e0;"></div>
<div class="r" style="left:625px;top:1006px;width:1292px;height:1px;background:#dedede;"></div>
<div class="r" style="left:625px;top:1007px;width:1292px;height:70px;background:#f9f9f9;"></div>
<svg class="r" style="left:650px;top:1030px;" width="22" height="24" viewBox="0 0 22 24"><path d="M15 5 L8.5 12 L15 19" fill="none" stroke="#7a7a7a" stroke-width="2"/></svg>
<div class="t" style="left:683.70px;top:1032px;font-size:19.5px;color:#1b1b1b;letter-spacing:1.155px;">50</div>
<svg class="r" style="left:720px;top:1036px;" width="16" height="10" viewBox="0 0 16 10"><path d="M1 1.5 H15 L8 9 Z" fill="#6a6a6a"/></svg>
<svg class="r" style="left:744px;top:1030px;" width="22" height="24" viewBox="0 0 22 24"><path d="M7.5 5 L14 12 L7.5 19" fill="none" stroke="#7a7a7a" stroke-width="2"/></svg>
</body></html>
